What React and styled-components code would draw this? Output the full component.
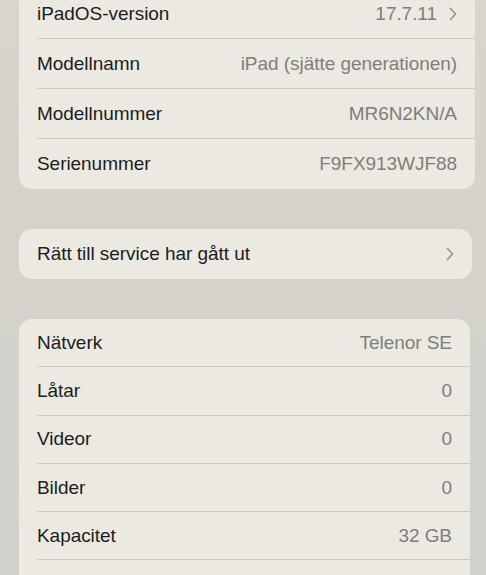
import React from "react";
import styled, { createGlobalStyle } from "styled-components";

const GlobalStyle = createGlobalStyle`
  *, *::before, *::after {
    box-sizing: border-box;
  }
  html, body {
    margin: 0;
    padding: 0;
    height: 100%;
  }
  body {
    background: linear-gradient(180deg, #d8d5cd 0%, #d4d2cb 45%, #d1d0cb 100%);
    font-family: "Liberation Sans", Arial, sans-serif;
    overflow: hidden;
  }
`;

const Page = styled.div`
  display: flex;
  flex-direction: column;
  gap: 40px;
  padding: 0 11px 0 19px;
  margin-top: -11px;
`;

const Card = styled.div`
  background: #ebe9e2;
  border-radius: 13px;
  display: flex;
  flex-direction: column;
  padding-left: 18px;
  margin-right: ${(p) => p.$inset || 0}px;
`;

const Row = styled.div`
  display: flex;
  align-items: center;
  justify-content: space-between;
  height: ${(p) => p.$h || 50}px;
  padding-right: 18px;
  border-bottom: ${(p) => (p.$last ? "none" : "1px solid #cbc9c1")};
`;

const Label = styled.span`
  font-size: 19px;
  color: #1d1d1b;
  letter-spacing: -0.05px;
`;

const Value = styled.span`
  display: flex;
  align-items: center;
  gap: 12px;
  font-size: 19px;
  color: #7f7e7a;
  letter-spacing: -0.05px;
`;

const Chevron = () => (
  <svg width="8" height="14" viewBox="0 0 8 14">
    <path
      d="M1.5 1.5 L6.5 7 L1.5 12.5"
      fill="none"
      stroke="#9a9994"
      strokeWidth="1.8"
      strokeLinecap="round"
      strokeLinejoin="round"
    />
  </svg>
);

const about = [
  ["iPadOS-version", "17.7.11", true],
  ["Modellnamn", "iPad (sjätte generationen)"],
  ["Modellnummer", "MR6N2KN/A"],
  ["Serienummer", "F9FX913WJF88"],
];

const media = [
  ["Nätverk", "Telenor SE"],
  ["Låtar", "0"],
  ["Videor", "0"],
  ["Bilder", "0"],
  ["Kapacitet", "32 GB"],
  ["Tillgängligt", "21,4 GB"],
];

export default function App() {
  return (
    <>
      <GlobalStyle />
      <Page>
        <Card>
          {about.map(([label, value, link], i) => (
            <Row key={label} $last={i === about.length - 1}>
              <Label>{label}</Label>
              <Value>
                {value}
                {link && <Chevron />}
              </Value>
            </Row>
          ))}
        </Card>
        <Card $inset={3}>
          <Row $last>
            <Label>Rätt till service har gått ut</Label>
            <Chevron />
          </Row>
        </Card>
        <Card $inset={5}>
          {media.map(([label, value]) => (
            <Row key={label} $h={48.3}>
              <Label>{label}</Label>
              <Value>{value}</Value>
            </Row>
          ))}
        </Card>
      </Page>
    </>
  );
}
